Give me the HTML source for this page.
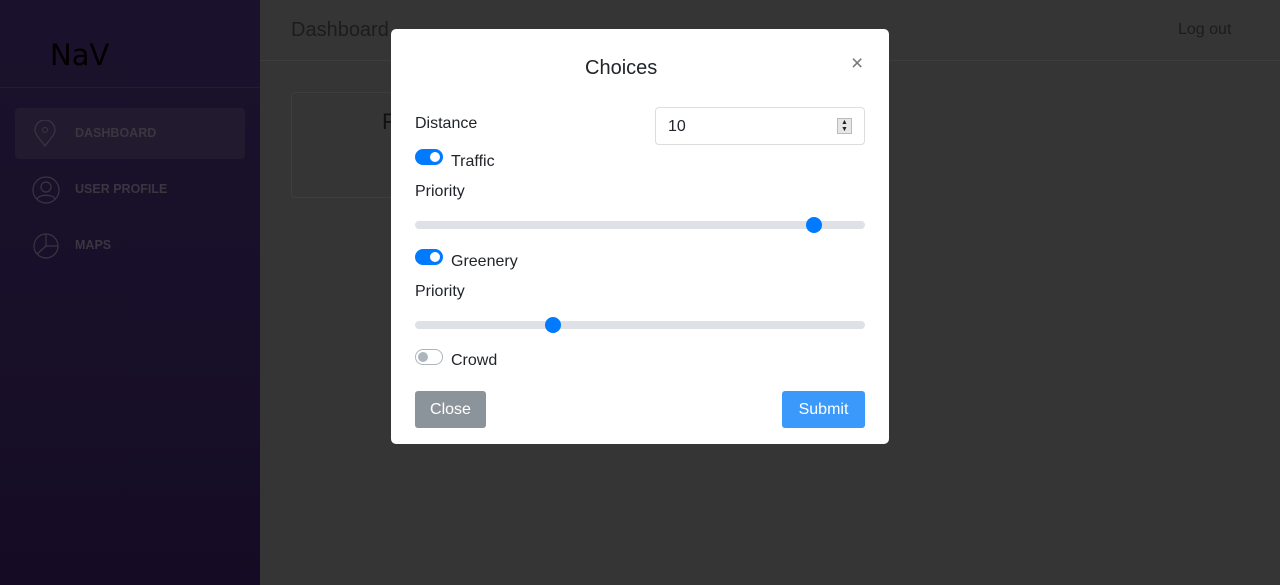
<!DOCTYPE html>
<html><head><meta charset="utf-8"><style>
*{box-sizing:border-box;margin:0;padding:0}
body{width:1280px;height:585px;overflow:hidden;font-family:"Liberation Sans",sans-serif;background:#353535;position:relative}
.side{position:absolute;left:0;top:0;width:260px;height:585px;background:linear-gradient(#1a122c,#180f29 60%,#150b24)}
.logo{position:absolute;left:50px;top:38px;font-size:29px;color:#000;font-family:"DejaVu Sans",sans-serif;font-weight:500}
.sep{position:absolute;left:0;right:0;top:87px;border-top:1px solid #251c33}
.item{position:absolute;left:15px;width:230px;height:51px;border-radius:4px;color:#3a3640;font-weight:bold;font-size:12.5px}
.item span{position:absolute;left:60px;top:18px}
.item svg{position:absolute;left:17px;top:12px}
.main-top{position:absolute;left:260px;top:0;right:0;height:61px;border-bottom:1px solid #3e3e3e;background:#353535}
.card{position:absolute;left:291px;top:92px;width:120px;height:106px;border:1px solid #3e3e3e;border-radius:4px;background:#353535}
.modal{position:absolute;left:391px;top:29px;width:498px;height:415px;background:#fff;border-radius:5px;color:#212529;font-family:"Liberation Sans",sans-serif;font-size:16px}
.abs{position:absolute}
.sw{position:absolute;left:24px;width:28px;height:16px;border-radius:8px;background:#007bff}
.sw::after{content:"";position:absolute;right:3px;top:3px;width:10px;height:10px;border-radius:50%;background:#fff}
.sw.off{background:#fff;border:1px solid #adb5bd}
.sw.off::after{left:2px;top:2px;background:#adb5bd}
.track{position:absolute;left:24px;width:450px;height:8px;border-radius:4px;background:#dee2e6}
.thumb{position:absolute;top:-4px;width:16px;height:16px;border-radius:50%;background:#007bff}
</style></head><body>
<div class="side">
<div class="logo">NaV</div><div class="sep"></div>
<div class="item" style="top:108px;background:#221a2f"><svg width="26" height="28" viewBox="0 0 26 28"><path d="M13 26C7 18 3 14 3 10a10 10 0 0 1 20 0c0 4-4 8-10 16z" fill="none" stroke="#3a3640" stroke-width="1.2"/><circle cx="13" cy="10" r="2.5" fill="none" stroke="#3a3640"/></svg><span>DASHBOARD</span></div>
<div class="item" style="top:164px"><svg width="28" height="28" viewBox="0 0 28 28"><circle cx="14" cy="14" r="13" fill="none" stroke="#3a3640" stroke-width="1.2"/><circle cx="14" cy="11" r="5" fill="none" stroke="#3a3640" stroke-width="1.2"/><path d="M5 23c2-5 16-5 18 0" fill="none" stroke="#3a3640" stroke-width="1.2"/></svg><span>USER PROFILE</span></div>
<div class="item" style="top:220px"><svg width="28" height="28" viewBox="0 0 28 28"><circle cx="14" cy="14" r="12" fill="none" stroke="#3a3640" stroke-width="1.2"/><path d="M14 2v12h12M14 14l-9 8" fill="none" stroke="#3a3640" stroke-width="1.2"/></svg><span>MAPS</span></div>
</div>
<div class="main-top"></div>
<div class="abs" style="left:291px;top:19px;font-size:20px;color:#1c1c1c">Dashboard</div>
<div class="abs" style="left:1178px;top:21px;font-size:16px;color:#1c1c1c">Log out</div>
<div class="card"><div class="abs" style="left:90px;top:16px;font-size:22px;color:#111">F</div></div>
<div class="modal">
<div class="abs" style="left:194px;top:28px;font-size:20px">Choices</div>
<div class="abs" style="left:460px;top:23px;font-size:21px;color:#777">×</div>
<div class="abs" style="left:24px;top:86px">Distance</div>
<div class="abs" style="left:264px;top:78px;width:210px;height:38px;border:1px solid #ddd;border-radius:4px"><span class="abs" style="left:12px;top:10px">10</span><div class="abs" style="left:181px;top:10px;width:15px;height:16px;background:#e6e6e6;border:1px solid #bbb;font-size:7px;line-height:7px;text-align:center">▲<br>▼</div></div>
<div class="sw" style="top:120px"></div><div class="abs" style="left:60px;top:124px">Traffic</div>
<div class="abs" style="left:24px;top:154px">Priority</div>
<div class="track" style="top:192px"><div class="thumb" style="left:391px"></div></div>
<div class="sw" style="top:220px"></div><div class="abs" style="left:60px;top:224px">Greenery</div>
<div class="abs" style="left:24px;top:254px">Priority</div>
<div class="track" style="top:292px"><div class="thumb" style="left:130px"></div></div>
<div class="sw off" style="top:320px"></div><div class="abs" style="left:60px;top:323px">Crowd</div>
<div class="abs" style="left:24px;top:362px;width:71px;height:37px;background:#8c949b;border-radius:3px;color:#fff;text-align:center;line-height:38px">Close</div>
<div class="abs" style="left:391px;top:362px;width:83px;height:37px;background:#3b99fc;border-radius:3px;color:#fff;text-align:center;line-height:38px">Submit</div>
</div>
</body></html>
